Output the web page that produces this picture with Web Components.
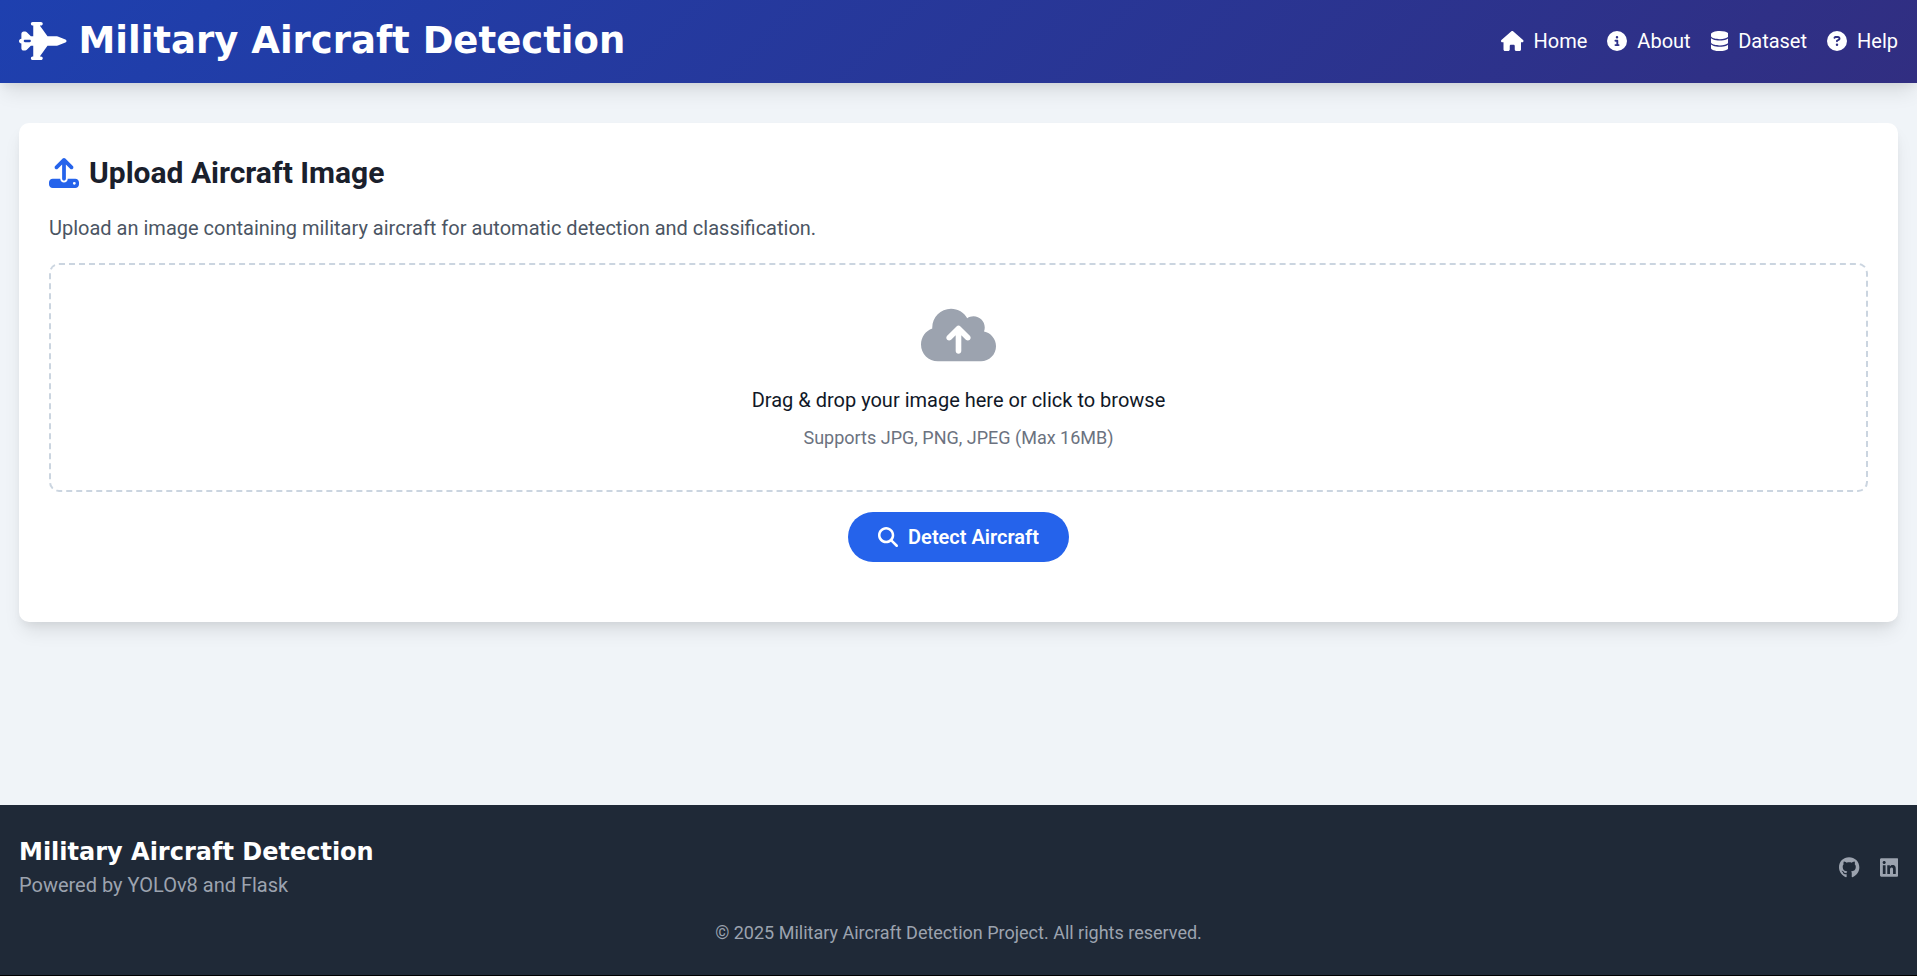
<!DOCTYPE html>
<html lang="en">
<head>
<meta charset="utf-8">
<meta name="viewport" content="width=device-width, initial-scale=1">
<title>Military Aircraft Detection</title>
<style>
  html { background: #000; }
  body { margin: 0; font: 20px/30px Roboto, "Liberation Sans", sans-serif; color: #111827; }
</style>
</head>
<body>
<detect-app></detect-app>
<script>
const ICONS = {
  jet: ['0 0 640 512', 'M160 24c0-13.3 10.7-24 24-24h112c13.3 0 24 10.7 24 24s-10.7 24-24 24H280L384 192H500.4c7.7 0 15.3 1.4 22.5 4.1L625 234.4c9 3.4 15 12 15 21.6s-6 18.2-15 21.6L522.9 315.9c-7.2 2.7-14.8 4.1-22.5 4.1H384L280 464h16c13.3 0 24 10.7 24 24s-10.7 24-24 24H184c-13.3 0-24-10.7-24-24s10.7-24 24-24h8V320H160l-54.6 54.6c-6 6-14.1 9.4-22.6 9.4H64c-17.7 0-32-14.3-32-32V288c-17.7 0-32-14.3-32-32s14.3-32 32-32V160c0-17.7 14.3-32 32-32H82.7c8.5 0 16.6 3.4 22.6 9.4L160 192h32V48h-8c-13.3 0-24-10.7-24-24zM80 240c-8.8 0-16 7.2-16 16s7.2 16 16 16h64c8.8 0 16-7.2 16-16s-7.2-16-16-16H80z'],
  house: ['0 0 576 512', 'M575.8 255.5c0 18-15 32.1-32 32.1h-32l.7 160.2c0 2.7-.2 5.4-.5 8.1V472c0 22.1-17.9 40-40 40H456c-1.1 0-2.2 0-3.3-.1c-1.4 .1-2.8 .1-4.2 .1H416 392c-22.1 0-40-17.9-40-40V448 384c0-17.7-14.3-32-32-32H256c-17.7 0-32 14.3-32 32v64 24c0 22.1-17.9 40-40 40H160 128.1c-1.5 0-3-.1-4.5-.2c-1.2 .1-2.4 .2-3.6 .2H104c-22.1 0-40-17.9-40-40V360c0-.9 0-1.9 .1-2.8V287.6H32c-18 0-32-14-32-32.1c0-9 3-17 10-24L266.4 8c7-7 15-8 22-8s15 2 21 7L564.8 231.5c8 7 12 15 11 24z'],
  info: ['0 0 512 512', 'M256 512A256 256 0 1 0 256 0a256 256 0 1 0 0 512zM216 336h24V272H216c-13.3 0-24-10.7-24-24s10.7-24 24-24h48c13.3 0 24 10.7 24 24v88h8c13.3 0 24 10.7 24 24s-10.7 24-24 24H216c-13.3 0-24-10.7-24-24s10.7-24 24-24zm40-208a32 32 0 1 1 0 64 32 32 0 1 1 0-64z'],
  database: ['0 0 448 512', 'M448 80v48c0 44.2-100.3 80-224 80S0 172.2 0 128V80C0 35.8 100.3 0 224 0S448 35.8 448 80zM393.2 214.7c20.8-7.4 39.9-16.9 54.8-28.6V288c0 44.2-100.3 80-224 80S0 332.2 0 288V186.1c14.9 11.8 34 21.2 54.8 28.6C99.7 230.7 159.5 240 224 240s124.3-9.3 169.2-25.3zM0 346.1c14.9 11.8 34 21.2 54.8 28.6C99.7 390.7 159.5 400 224 400s124.3-9.3 169.2-25.3c20.8-7.4 39.9-16.9 54.8-28.6V432c0 44.2-100.3 80-224 80S0 476.2 0 432V346.1z'],
  question: ['0 0 512 512', 'M256 512A256 256 0 1 0 256 0a256 256 0 1 0 0 512zM169.8 165.3c7.9-22.3 29.1-37.3 52.8-37.3h58.3c34.9 0 63.1 28.3 63.1 63.1c0 22.6-12.1 43.5-31.7 54.8L280 264.4c-.2 13-10.9 23.6-24 23.6c-13.3 0-24-10.7-24-24V250.5c0-8.6 4.6-16.5 12.1-20.8l44.3-25.4c4.7-2.7 7.6-7.7 7.6-13.1c0-8.4-6.8-15.1-15.1-15.1H222.6c-3.4 0-6.4 2.1-7.5 5.3l-.4 1.2c-4.4 12.5-18.2 19-30.6 14.6s-19-18.2-14.6-30.6l.4-1.2zM224 352a32 32 0 1 1 64 0 32 32 0 1 1-64 0z'],
  upload: ['0 0 512 512', 'M288 109.3V352c0 17.7-14.3 32-32 32s-32-14.3-32-32V109.3l-73.4 73.4c-12.5 12.5-32.8 12.5-45.3 0s-12.5-32.8 0-45.3l128-128c12.5-12.5 32.8-12.5 45.3 0l128 128c12.5 12.5 12.5 32.8 0 45.3s-32.8 12.5-45.3 0L288 109.3zM64 352H192c0 35.3 28.7 64 64 64s64-28.7 64-64H448c35.3 0 64 28.7 64 64v32c0 35.3-28.7 64-64 64H64c-35.3 0-64-28.7-64-64V416c0-35.3 28.7-64 64-64zM432 456a24 24 0 1 0 0-48 24 24 0 1 0 0 48z'],
  cloud: ['0 0 640 512', 'M144 480C64.5 480 0 415.5 0 336c0-62.8 40.2-116.2 96.2-135.9c-.1-2.7-.2-5.4-.2-8.1c0-88.4 71.6-160 160-160c59.3 0 111 32.2 138.7 80.2C409.9 102 428.3 96 448 96c53 0 96 43 96 96c0 12.2-2.3 23.8-6.4 34.6C596 238.4 640 290.1 640 352c0 70.7-57.3 128-128 128H144zm79-217c-9.4 9.4-9.4 24.6 0 33.9s24.6 9.4 33.9 0l39-39V392c0 13.3 10.7 24 24 24s24-10.7 24-24V257.9l39 39c9.4 9.4 24.6 9.4 33.9 0s9.4-24.6 0-33.9l-80-80c-9.4-9.4-24.6-9.4-33.9 0l-80 80z'],
  search: ['0 0 512 512', 'M416 208c0 45.9-14.9 88.3-40 122.7L502.6 457.4c12.5 12.5 12.5 32.8 0 45.3s-32.8 12.5-45.3 0L330.7 376c-34.4 25.2-76.8 40-122.7 40C93.1 416 0 322.9 0 208S93.1 0 208 0S416 93.1 416 208zM208 352a144 144 0 1 0 0-288 144 144 0 1 0 0 288z'],
  github: ['0 0 496 512', 'M165.9 397.4c0 2-2.3 3.6-5.2 3.6-3.3.3-5.6-1.3-5.6-3.6 0-2 2.3-3.6 5.2-3.6 3-.3 5.6 1.3 5.6 3.6zm-31.1-4.5c-.7 2 1.3 4.3 4.3 4.9 2.6 1 5.6 0 6.2-2s-1.3-4.3-4.3-5.2c-2.6-.7-5.5.3-6.2 2.3zm44.2-1.7c-2.9.7-4.9 2.6-4.6 4.9.3 2 2.9 3.3 5.9 2.6 2.9-.7 4.9-2.6 4.6-4.6-.3-1.9-3-3.2-5.9-2.9zM244.8 8C106.1 8 0 113.3 0 252c0 110.9 69.8 205.8 169.5 239.2 12.8 2.3 17.3-5.6 17.3-12.1 0-6.2-.3-40.4-.3-61.4 0 0-70 15-84.7-29.8 0 0-11.4-29.1-27.8-36.6 0 0-22.9-15.7 1.6-15.4 0 0 24.9 2 38.6 25.8 21.9 38.6 58.6 27.5 72.9 20.9 2.3-16 8.8-27.1 16-33.7-55.9-6.2-112.3-14.3-112.3-110.5 0-27.5 7.6-41.3 23.6-58.9-2.6-6.5-11.1-33.3 2.6-67.9 20.9-6.5 69 27 69 27 20-5.6 41.5-8.5 62.8-8.5s42.8 2.9 62.8 8.5c0 0 48.1-33.6 69-27 13.7 34.7 5.2 61.4 2.6 67.9 16 17.7 25.8 31.5 25.8 58.9 0 96.5-58.9 104.2-114.8 110.5 9.2 7.9 17 22.9 17 46.4 0 33.7-.3 75.4-.3 83.6 0 6.5 4.6 14.4 17.3 12.1C428.2 457.8 496 362.9 496 252 496 113.3 383.5 8 244.8 8z'],
  linkedin: ['0 0 448 512', 'M416 32H31.9C14.3 32 0 46.5 0 64.3v383.4C0 465.5 14.3 480 31.9 480H416c17.6 0 32-14.5 32-32.3V64.3c0-17.8-14.4-32.3-32-32.3zM135.4 416H69V202.2h66.5V416zm-33.2-243c-21.3 0-38.5-17.3-38.5-38.5S80.9 96 102.2 96c21.2 0 38.5 17.3 38.5 38.5 0 21.3-17.2 38.5-38.5 38.5zm282.1 243h-66.4V312c0-24.8-.5-56.7-34.5-56.7-34.6 0-39.9 27-39.9 54.9V416h-66.4V202.2h63.7v29.2h.9c8.9-16.8 30.6-34.5 62.9-34.5 67.2 0 79.7 44.3 79.7 101.9V416z']
};

function define(name, html) {
  const template = document.createElement('template');
  template.innerHTML = html;
  customElements.define(name, class extends HTMLElement {
    constructor() {
      super();
      this.attachShadow({ mode: 'open' }).append(template.content.cloneNode(true));
    }
  });
}

customElements.define('app-icon', class extends HTMLElement {
  constructor() {
    super();
    this.attachShadow({ mode: 'open' });
  }
  connectedCallback() {
    const [box, path] = ICONS[this.getAttribute('name')];
    this.shadowRoot.innerHTML = `
      <style>
        :host { display: inline-flex; flex: none; height: var(--icon-size, 20px); }
        svg { display: block; height: 100%; width: auto; fill: currentColor; }
      </style>
      <svg viewBox="${box}" aria-hidden="true"><path fill-rule="evenodd" d="${path}"/></svg>`;
  }
});

customElements.define('nav-link', class extends HTMLElement {
  constructor() {
    super();
    this.attachShadow({ mode: 'open' }).innerHTML = `
      <style>
        :host { display: block; }
        a { display: flex; align-items: center; gap: 10px; color: inherit; text-decoration: none; }
        a:hover { color: #bfdbfe; }
      </style>
      <a href="#"><app-icon name="${this.getAttribute('icon')}"></app-icon><slot></slot></a>`;
  }
});

customElements.define('social-link', class extends HTMLElement {
  constructor() {
    super();
    this.attachShadow({ mode: 'open' }).innerHTML = `
      <style>
        :host { display: block; color: #9ca3af; --icon-size: 21px; }
        a { display: flex; color: inherit; }
        a:hover { color: #fff; }
      </style>
      <a href="#" aria-label="${this.getAttribute('label')}"><app-icon name="${this.getAttribute('icon')}"></app-icon></a>`;
  }
});

define('site-header', `
  <style>
    :host { display: block; color: #fff; background: linear-gradient(135deg, #1e40af, #312e81);
      box-shadow: 0 12px 19px -4px rgba(0,0,0,.1), 0 5px 8px -2px rgba(0,0,0,.05); }
    header { box-sizing: border-box; display: flex; flex-wrap: wrap; justify-content: space-between; align-items: center;
      gap: 8px 20px; min-height: 83px; padding: 0 19px 2px; }
    .brand { display: flex; align-items: center; gap: 12px; --icon-size: 38px; }
    h1 { margin: 0; font: bold 37px/44px "DejaVu Sans", sans-serif; }
    nav { display: flex; flex-wrap: wrap; gap: 20px; }
  </style>
  <header>
    <div class="brand"><app-icon name="jet"></app-icon><h1>Military Aircraft Detection</h1></div>
    <nav aria-label="Main">
      <nav-link icon="house">Home</nav-link>
      <nav-link icon="info">About</nav-link>
      <nav-link icon="database">Dataset</nav-link>
      <nav-link icon="question">Help</nav-link>
    </nav>
  </header>`);

define('drop-zone', `
  <style>
    :host { display: block; }
    label { display: flex; flex-direction: column; align-items: center; padding: 40px 20px;
      border: 2px dashed #cbd5e0; border-radius: 10px; text-align: center; cursor: pointer; }
    input { position: absolute; width: 1px; height: 1px; opacity: 0; }
    app-icon { --icon-size: 60px; color: #9ca3af; }
    .lead { margin-top: 20px; }
    .hint { margin-top: 10px; font-size: 18px; line-height: 25px; color: #6b7280; }
  </style>
  <label>
    <input type="file" accept=".jpg,.jpeg,.png">
    <app-icon name="cloud"></app-icon>
    <span class="lead">Drag &amp; drop your image here or click to browse</span>
    <span class="hint">Supports JPG, PNG, JPEG (Max 16MB)</span>
  </label>`);

define('upload-card', `
  <style>
    :host { display: block; background: #fff; border-radius: 10px;
      box-shadow: 0 12px 19px -4px rgba(0,0,0,.1), 0 5px 8px -2px rgba(0,0,0,.05); }
    section { padding: 30px 30px 60px; }
    h2 { display: flex; align-items: center; gap: 10px; margin: 0 0 20px; font-size: 30px; line-height: 40px; font-weight: 700; color: #1a202c; }
    h2 app-icon { --icon-size: 30px; color: #2563eb; }
    p { margin: 0 0 20px; color: #4b5563; }
    .actions { display: flex; justify-content: center; margin-top: 20px; }
    button { display: flex; align-items: center; gap: 10px; padding: 10px 30px; border: 0; border-radius: 25px;
      background: #2563eb; color: #fff; font: 600 20px/30px Roboto, "Liberation Sans", sans-serif; cursor: pointer; }
    button:hover { background: #1d4ed8; }
  </style>
  <section>
    <h2><app-icon name="upload"></app-icon>Upload Aircraft Image</h2>
    <p>Upload an image containing military aircraft for automatic detection and classification.</p>
    <drop-zone></drop-zone>
    <div class="actions"><button type="button"><app-icon name="search"></app-icon>Detect Aircraft</button></div>
  </section>`);

define('site-footer', `
  <style>
    :host { display: block; background: #1f2937; color: #9ca3af; }
    footer { padding: 30px 19px; }
    .row { display: flex; flex-wrap: wrap; justify-content: space-between; align-items: center; gap: 20px; }
    h3 { margin: 0; font: bold 24px/35px "DejaVu Sans", sans-serif; color: #fff; }
    p { margin: 0; }
    .social { display: flex; gap: 20px; }
    .copy { margin-top: 20px; font-size: 18px; line-height: 25px; text-align: center; }
  </style>
  <footer>
    <div class="row">
      <div><h3>Military Aircraft Detection</h3><p>Powered by YOLOv8 and Flask</p></div>
      <div class="social">
        <social-link icon="github" label="GitHub"></social-link>
        <social-link icon="linkedin" label="LinkedIn"></social-link>
      </div>
    </div>
    <p class="copy">© 2025 Military Aircraft Detection Project. All rights reserved.</p>
  </footer>`);

define('detect-app', `
  <style>
    :host { display: flex; flex-direction: column; min-height: calc(100vh - 1px); background: #f0f4f8; }
    main { flex: 1; padding: 40px 19px; }
  </style>
  <site-header></site-header>
  <main><upload-card></upload-card></main>
  <site-footer></site-footer>`);
</script>
</body>
</html>
